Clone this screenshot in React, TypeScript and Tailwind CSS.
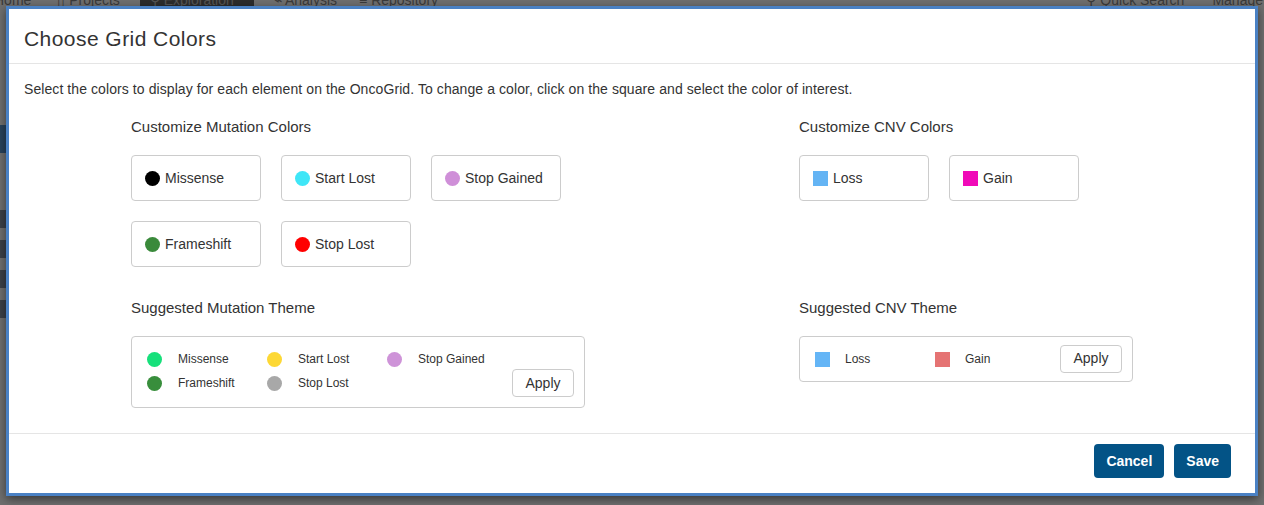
import React from "react";

const mutationColors = [
  { label: "Missense", color: "bg-[#000000]" },
  { label: "Start Lost", color: "bg-[#3fe6f7]" },
  { label: "Stop Gained", color: "bg-[#cf8fd8]" },
  { label: "Frameshift", color: "bg-[#3a8a3b]" },
  { label: "Stop Lost", color: "bg-[#ff0000]" },
];

const cnvColors = [
  { label: "Loss", color: "bg-[#64b4f4]" },
  { label: "Gain", color: "bg-[#f00ab8]" },
];

const mutationTheme = [
  { label: "Missense", color: "bg-[#17e07b]" },
  { label: "Start Lost", color: "bg-[#fdd835]" },
  { label: "Stop Gained", color: "bg-[#ce93d8]" },
  { label: "Frameshift", color: "bg-[#388e3c]" },
  { label: "Stop Lost", color: "bg-[#a8a8a8]" },
];

const cnvTheme = [
  { label: "Loss", color: "bg-[#64b5f6]" },
  { label: "Gain", color: "bg-[#e57373]" },
];

const ColorButton = ({ label, color, square }: { label: string; color: string; square?: boolean }) => (
  <button className="w-[130px] h-[46px] flex items-center pl-[13px] border border-[#cccccc] rounded-[4px] bg-white text-[14px] text-[#333333]">
    <span className={`${square ? "w-[15px] h-[15px]" : "w-[15px] h-[15px] rounded-full"} ${color} mr-[5px]`} />
    {label}
  </button>
);

const ApplyButton = () => (
  <button className="w-[62px] h-[28px] border border-[#cccccc] rounded-[4px] bg-white text-[14px] text-[#333333]">
    Apply
  </button>
);

const App = () => {
  return (
    <div className="relative w-[1264px] h-[505px] bg-[#6f6f6f] overflow-hidden font-['Liberation_Sans',Arial,sans-serif]">
      {/* page behind the overlay */}
      <div className="absolute top-[-8px] left-0 right-0 h-[16px] flex items-center text-[14px] text-[#3a3a3a]">
        <span className="ml-[-6px]">Home</span>
        <span className="ml-[26px]">▯ Projects</span>
        <span className="ml-[20px] w-[114px] px-[10px] bg-[#2c2c2c] text-[#555]">⚲ Exploration</span>
        <span className="ml-[20px]">⌁ Analysis</span>
        <span className="ml-[22px]">≡ Repository</span>
        <span className="ml-auto">⚲ Quick Search</span>
        <span className="ml-[28px] mr-[-20px]">Manage Se</span>
      </div>
      <div className="absolute left-0 top-[125px] w-[6px] h-[28px] bg-[#27425c]" />
      <div className="absolute left-0 top-[210px] w-[6px] h-[18px] bg-[#3b4048]" />
      <div className="absolute left-0 top-[240px] w-[6px] h-[18px] bg-[#3b4048]" />
      <div className="absolute left-0 top-[270px] w-[6px] h-[18px] bg-[#3b4048]" />
      <div className="absolute left-0 top-[300px] w-[6px] h-[18px] bg-[#3b4048]" />

      {/* modal */}
      <div className="absolute left-[6px] top-[6px] w-[1252px] h-[490px] border-[3px] border-[#4a81c4] bg-white shadow-[0_3px_9px_rgba(0,0,0,0.5)] flex flex-col">
        <div className="h-[55px] border-b border-[#e5e5e5] flex items-center px-[15px] shrink-0">
          <h4 className="text-[21px] tracking-[0.45px] text-[#333333] pt-[6px]">Choose Grid Colors</h4>
        </div>

        <div className="flex-1 px-[15px] pt-[16px]">
          <p className="text-[14px] leading-[18px] tracking-[0.08px] text-[#333333]">
            Select the colors to display for each element on the OncoGrid. To change a color, click on the square and select the color of interest.
          </p>

          <div className="flex mt-[19px] ml-[107px]">
            <div className="w-[668px]">
              <h5 className="text-[15px] leading-[20px] text-[#333333]">Customize Mutation Colors</h5>
              <div className="grid grid-cols-[repeat(3,130px)] gap-[20px] mt-[18px]">
                {mutationColors.map((m) => (
                  <ColorButton key={m.label} label={m.label} color={m.color} />
                ))}
              </div>
            </div>
            <div>
              <h5 className="text-[15px] leading-[20px] text-[#333333]">Customize CNV Colors</h5>
              <div className="flex gap-[20px] mt-[18px]">
                {cnvColors.map((c) => (
                  <ColorButton key={c.label} label={c.label} color={c.color} square />
                ))}
              </div>
            </div>
          </div>

          <div className="flex mt-[31px] ml-[107px]">
            <div className="w-[668px]">
              <h5 className="text-[15px] leading-[20px] text-[#333333]">Suggested Mutation Theme</h5>
              <div className="w-[454px] h-[72px] mt-[18px] border border-[#cccccc] rounded-[4px] flex pl-[15px] pr-[10px] pt-[10px] pb-[10px]">
                <div className="grid grid-cols-[repeat(3,120px)] grid-rows-[24px_24px] flex-1">
                  {mutationTheme.map((m) => (
                    <div key={m.label} className="flex items-center text-[12px] text-[#333333]">
                      <span className={`w-[15px] h-[15px] rounded-full ${m.color} mr-[16px]`} />
                      {m.label}
                    </div>
                  ))}
                </div>
                <div className="self-end">
                  <ApplyButton />
                </div>
              </div>
            </div>
            <div>
              <h5 className="text-[15px] leading-[20px] text-[#333333]">Suggested CNV Theme</h5>
              <div className="w-[334px] h-[46px] mt-[18px] border border-[#cccccc] rounded-[4px] flex items-center pl-[15px] pr-[10px]">
                <div className="flex flex-1">
                  {cnvTheme.map((c) => (
                    <div key={c.label} className="w-[120px] flex items-center text-[12px] text-[#333333]">
                      <span className={`w-[15px] h-[15px] ${c.color} mr-[15px]`} />
                      {c.label}
                    </div>
                  ))}
                </div>
                <div className="mt-[-1px]">
                  <ApplyButton />
                </div>
              </div>
            </div>
          </div>
        </div>

        <div className="h-[60px] border-t border-[#e5e5e5] flex items-start justify-end gap-[10px] pt-[10px] pr-[24px] shrink-0">
          <button className="h-[34px] px-[12px] rounded-[4px] bg-[#035386] text-white text-[14px] font-bold">Cancel</button>
          <button className="h-[34px] px-[12px] rounded-[4px] bg-[#035386] text-white text-[14px] font-bold">Save</button>
        </div>
      </div>
    </div>
  );
};

export default App;
